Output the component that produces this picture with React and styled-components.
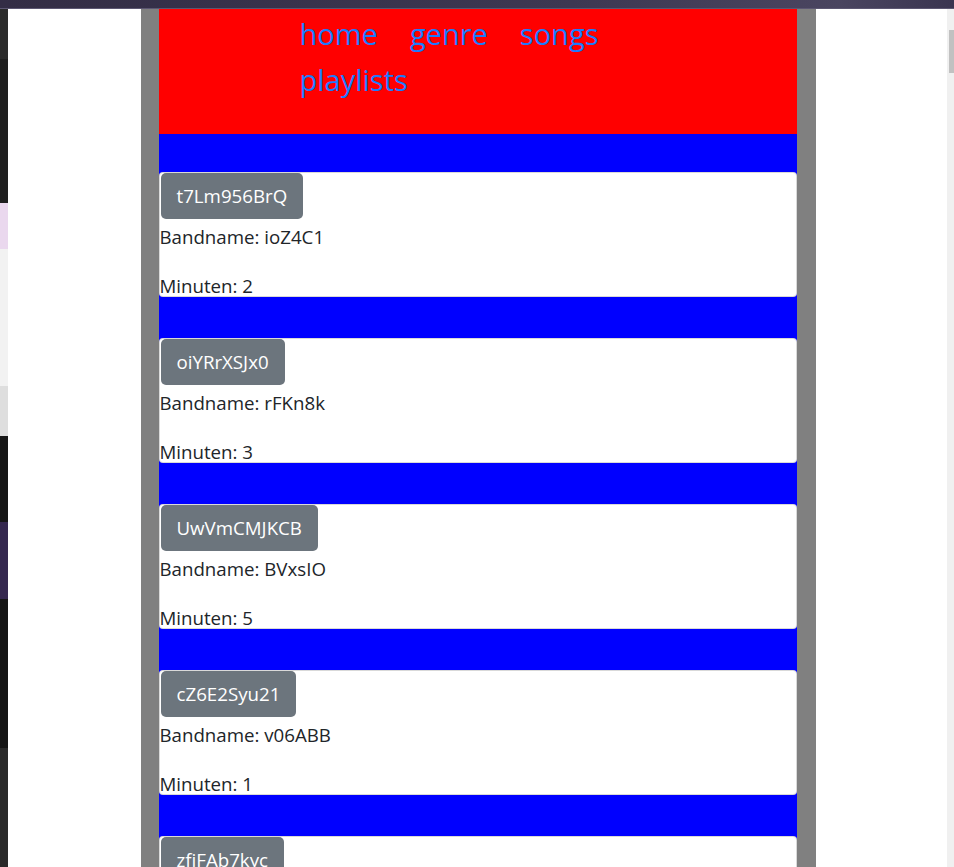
import React from "react";
import styled, { createGlobalStyle } from "styled-components";

const Global = createGlobalStyle`
html, body {
  margin: 0;
  padding: 0;
  height: 867px;
  overflow: hidden;
  background: #ffffff;
}
body {
  font-family: "Segoe UI", "Open Sans", "Noto Sans", sans-serif;
  color: #212529;
}
`

const Screen = styled.div`
  display: flex;
  flex-direction: column;
  width: 954px;
  height: 867px;
`
const TopStrip = styled.div`
  height: 8px;
  background: linear-gradient(90deg, #332d45 0%, #3d3852 60%, #4a4560 88%, #3a3550 100%);
  border-bottom: 1px solid #5c5772;
  flex-shrink: 0;
`
const Body = styled.div`
  display: flex;
  flex: 1;
  min-height: 0;
`
const LeftStrip = styled.div`
  width: 8px;
  display: flex;
  flex-direction: column;
  flex-shrink: 0;
`
const Seg = styled.div`
  height: ${p => p.h}px;
  background: ${p => p.c};
`
const Page = styled.div`
  flex: 1;
  background: #ffffff;
  display: flex;
  justify-content: center;
  overflow: hidden;
`
const Scrollbar = styled.div`
  width: 7px;
  background: #f0f0f0;
  display: flex;
  flex-direction: column;
  padding-top: 21px;
  align-items: flex-end;
  flex-shrink: 0;
`
const Thumb = styled.div`
  width: 5px;
  height: 43px;
  background: #c1c1c1;
`
const Column = styled.div`
  width: 638px;
  padding: 0 19px 0 18px;
  margin-left: 1px;
  background: #808080;
  display: flex;
  flex-direction: column;
`
const Header = styled.header`
  height: 125px;
  background: #ff0000;
  padding-left: 141px;
  flex-shrink: 0;
`
const Nav = styled.nav`
  display: flex;
  flex-wrap: wrap;
  column-gap: 32px;
  width: 380px;
  padding-top: 2px;
`
const NavLink = styled.a`
  font-size: 29px;
  line-height: 46px;
  color: #1a7cff;
  text-decoration: none;
`
const List = styled.div`
  background: #0000ff;
  padding-top: 38px;
  display: flex;
  flex-direction: column;
  gap: 41px;
  flex: 1;
`
const Card = styled.div`
  height: 123px;
  background: #ffffff;
  border: 1px solid rgba(0, 0, 0, 0.15);
  border-radius: 4px;
  display: flex;
  flex-direction: column;
  align-items: flex-start;
  flex-shrink: 0;
`
const Title = styled.button`
  height: 46px;
  margin: 0 0 0 1px;
  padding: 0 16px;
  border: none;
  border-radius: 5px;
  background: #6c757d;
  color: #ffffff;
  font-family: inherit;
  font-size: 18.7px;
  line-height: 46px;
`
const Info = styled.p`
  margin: ${p => (p.first ? "4px 0 22px" : "0")};
  font-size: 18.7px;
  line-height: 27px;
`

const songs = [
  { id: "t7Lm956BrQ", band: "ioZ4C1", min: 2 },
  { id: "oiYRrXSJx0", band: "rFKn8k", min: 3 },
  { id: "UwVmCMJKCB", band: "BVxsIO", min: 5 },
  { id: "cZ6E2Syu21", band: "v06ABB", min: 1 },
  { id: "zfiFAb7kyc", band: "Xq2LmP", min: 4 },
];

const strip = [
  ["#2b2b2b", 50], ["#1f1f1f", 146], ["#ead8ee", 46], ["#f2f2f2", 138],
  ["#dedede", 50], ["#161616", 87], ["#35284f", 78], ["#151515", 150], ["#2a2a2a", 120],
];

function App() {
  return (
    <Screen>
      <Global />
      <TopStrip />
      <Body>
        <LeftStrip>
          {strip.map(([c, h], i) => <Seg key={i} c={c} h={h} />)}
        </LeftStrip>
        <Page>
          <Column>
            <Header>
              <Nav>
                <NavLink href="#">home</NavLink>
                <NavLink href="#">genre</NavLink>
                <NavLink href="#">songs</NavLink>
                <NavLink href="#">playlists</NavLink>
              </Nav>
            </Header>
            <List>
              {songs.map(s => (
                <Card key={s.id}>
                  <Title>{s.id}</Title>
                  <Info first>Bandname: {s.band}</Info>
                  <Info>Minuten: {s.min}</Info>
                </Card>
              ))}
            </List>
          </Column>
        </Page>
        <Scrollbar><Thumb /></Scrollbar>
      </Body>
    </Screen>
  );
}

export default App;
